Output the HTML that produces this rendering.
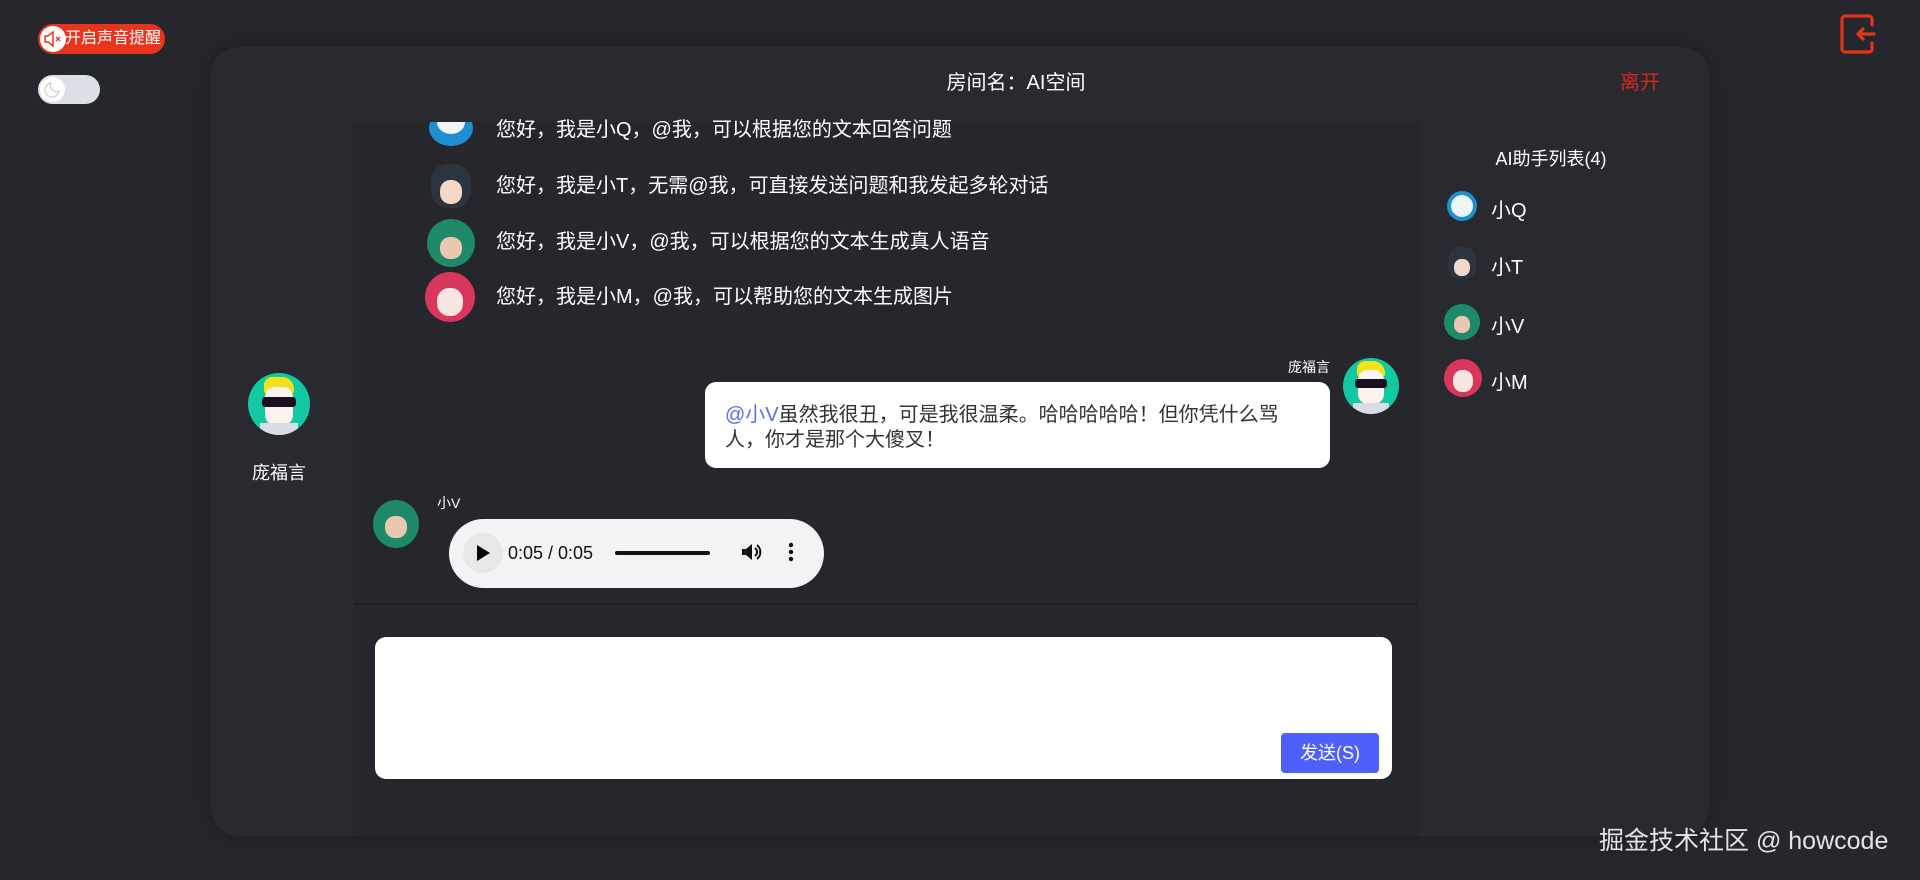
<!DOCTYPE html>
<html><head><meta charset="utf-8"><style>
*{margin:0;padding:0;box-sizing:border-box}
body{width:1920px;height:880px;overflow:hidden;background:#25272c;font-family:"Liberation Sans","Noto Sans CJK SC",sans-serif;color:#fff;position:relative}
.abs{position:absolute}
.panel{left:211px;top:47px;width:1498px;height:789px;background:#282a2f;border-radius:28px;box-shadow:0 0 30px rgba(0,0,0,.25)}
.av{position:absolute;border-radius:50%;overflow:hidden}
.msg{position:absolute;left:496px;font-size:20px;color:#fff;line-height:24px}
.side{position:absolute;left:1491px;font-size:20px}
</style></head><body>
<div class="abs" style="left:38px;top:24px;width:127px;height:30px;background:#e8341c;border-radius:15px"></div>
<div class="abs" style="left:40px;top:26px;width:26px;height:26px;background:#fff;border-radius:50%"></div>
<svg class="abs" style="left:42px;top:30px" width="22" height="18" viewBox="0 0 22 18"><path d="M3 6h3l5-4v14l-5-4H3z" fill="none" stroke="#e8341c" stroke-width="1.5"/><path d="M14 7l4 4M18 7l-4 4" stroke="#e8341c" stroke-width="1.3"/></svg>
<div class="abs" style="left:65px;top:28px;font-size:16px;line-height:22px;color:#fff">开启声音提醒</div>
<div class="abs" style="left:38px;top:75px;width:62px;height:29px;background:#dcdfe6;border-radius:15px"></div>
<div class="abs" style="left:40px;top:77px;width:25px;height:25px;background:#fff;border-radius:50%"></div>
<svg class="abs" style="left:43px;top:80px" width="19" height="19" viewBox="0 0 19 19"><path d="M8 3a7 7 0 1 0 8 8A6 6 0 0 1 8 3z" fill="none" stroke="#ccc" stroke-width="1.2"/></svg>
<svg class="abs" style="left:1838px;top:13px" width="42" height="42" viewBox="0 0 42 42"><path d="M34 12V6a3 3 0 0 0-3-3H7a3 3 0 0 0-3 3v30a3 3 0 0 0 3 3h24a3 3 0 0 0 3-3v-6" fill="none" stroke="#e0341c" stroke-width="3.2" stroke-linecap="round"/><path d="M36 21H20M25 16l-5 5 5 5" fill="none" stroke="#e0341c" stroke-width="3.2" stroke-linecap="round" stroke-linejoin="round"/></svg>

<div class="abs panel"></div>
<div class="abs" style="left:0;width:2032px;top:70px;text-align:center;font-size:20px;line-height:26px">房间名：AI空间</div>
<div class="abs" style="left:1620px;top:70px;font-size:20px;line-height:26px;color:#d9261c">离开</div>

<div class="av" style="left:248px;top:373px;width:62px;height:62px;background:#12c9a4">
<div class="abs" style="left:16px;top:4px;width:30px;height:16px;background:#f5e11b;border-radius:8px 12px 2px 2px"></div>
<div class="abs" style="left:17px;top:14px;width:28px;height:38px;background:#fdf3ee;border-radius:10px"></div>
<div class="abs" style="left:14px;top:24px;width:34px;height:10px;background:#1a1020;border-radius:3px"></div>
<div class="abs" style="left:12px;top:50px;width:38px;height:14px;background:#d8dde6"></div>
</div>
<div class="abs" style="left:252px;top:461px;font-size:18px;line-height:24px">庞福言</div>

<div class="abs" style="left:353px;top:122px;width:1064px;height:482px;background:#25272c"></div>
<div class="abs" style="left:1417px;top:122px;width:2px;height:714px;background:#23252a"></div>
<div class="abs" style="left:353px;top:603px;width:1064px;height:2px;background:#1f2125"></div>
<div class="abs" style="left:353px;top:605px;width:1064px;height:231px;background:#25272c"></div>

<div class="abs" style="left:353px;top:122px;width:1064px;height:482px;overflow:hidden">
<div class="av" style="left:76px;top:-12px;width:44px;height:36px;background:#1e8fd0"><div class="abs" style="left:8px;top:0;width:28px;height:24px;background:#eef4f7;border-radius:50%"></div></div>
<div class="av" style="left:78px;top:42px;width:40px;height:44px;background:#2c3440;border-radius:40%"><div class="abs" style="left:9px;top:16px;width:22px;height:24px;background:#f3d8c8;border-radius:45%"></div></div>
<div class="av" style="left:74px;top:97px;width:48px;height:48px;background:#1f8a6a"><div class="abs" style="left:13px;top:18px;width:22px;height:22px;background:#e9c7b0;border-radius:45%"></div></div>
<div class="av" style="left:72px;top:150px;width:50px;height:50px;background:#d8365a"><div class="abs" style="left:12px;top:16px;width:26px;height:28px;background:#f6e5e0;border-radius:45%"></div></div>
</div>
<div class="msg" style="top:118px">您好，我是小Q，@我，可以根据您的文本回答问题</div>
<div class="msg" style="top:174px">您好，我是小T，无需@我，可直接发送问题和我发起多轮对话</div>
<div class="msg" style="top:230px">您好，我是小V，@我，可以根据您的文本生成真人语音</div>
<div class="msg" style="top:285px">您好，我是小M，@我，可以帮助您的文本生成图片</div>

<div class="abs" style="left:1230px;top:358px;width:100px;text-align:right;font-size:14px;line-height:18px">庞福言</div>
<div class="av" style="left:1343px;top:358px;width:56px;height:56px;background:#12c9a4">
<div class="abs" style="left:14px;top:3px;width:28px;height:15px;background:#f5e11b;border-radius:8px 12px 2px 2px"></div>
<div class="abs" style="left:15px;top:12px;width:26px;height:34px;background:#fdf3ee;border-radius:10px"></div>
<div class="abs" style="left:12px;top:21px;width:32px;height:9px;background:#1a1020;border-radius:3px"></div>
<div class="abs" style="left:10px;top:45px;width:36px;height:12px;background:#d8dde6"></div>
</div>
<div class="abs" style="left:705px;top:382px;width:625px;height:86px;background:#fff;border-radius:11px;padding:21px 44px 17px 20px;font-size:20px;line-height:25px;color:#333"><span style="color:#5b6cf0">@小V</span>虽然我很丑，可是我很温柔。哈哈哈哈哈！但你凭什么骂人，你才是那个大傻叉！</div>

<div class="av" style="left:373px;top:500px;width:46px;height:48px;background:#1f8a6a"><div class="abs" style="left:12px;top:16px;width:22px;height:22px;background:#e9c7b0;border-radius:45%"></div></div>
<div class="abs" style="left:437px;top:494px;font-size:14px;line-height:18px">小V</div>
<div class="abs" style="left:449px;top:519px;width:375px;height:69px;background:#f1f3f4;border-radius:35px"></div>
<div class="abs" style="left:463px;top:533px;width:40px;height:40px;background:#e6e7e9;border-radius:50%"></div>
<svg class="abs" style="left:475px;top:544px" width="16" height="18"><path d="M2 1l13 8-13 8z" fill="#000"/></svg>
<div class="abs" style="left:508px;top:541px;font-size:18px;line-height:24px;color:#111">0:05 / 0:05</div>
<div class="abs" style="left:615px;top:551px;width:95px;height:4px;background:#111;border-radius:2px"></div>
<svg class="abs" style="left:740px;top:541px" width="22" height="22" viewBox="0 0 22 22"><path d="M2 8h4l6-5v16l-6-5H2z" fill="#111"/><path d="M15 7a5 5 0 0 1 0 8M17 4a9 9 0 0 1 0 14" stroke="#111" stroke-width="2" fill="none"/></svg>
<svg class="abs" style="left:788px;top:542px" width="6" height="20"><circle cx="3" cy="3" r="2.2" fill="#111"/><circle cx="3" cy="10" r="2.2" fill="#111"/><circle cx="3" cy="17" r="2.2" fill="#111"/></svg>

<div class="abs" style="left:375px;top:637px;width:1017px;height:142px;background:#fff;border-radius:11px"></div>
<div class="abs" style="left:1281px;top:733px;width:98px;height:40px;background:#4e5ffb;border-radius:4px;font-size:18px;line-height:40px;text-align:center;color:#fff">发送(S)</div>

<div class="abs" style="left:1420px;width:262px;top:147px;text-align:center;font-size:18px;line-height:24px">AI助手列表(4)</div>
<div class="av" style="left:1447px;top:191px;width:30px;height:30px;background:#1e8fd0"><div class="abs" style="left:4px;top:4px;width:22px;height:22px;background:#eef4f7;border-radius:50%"></div></div>
<div class="av" style="left:1448px;top:247px;width:28px;height:32px;background:#2c3440;border-radius:40%"><div class="abs" style="left:6px;top:12px;width:16px;height:17px;background:#f3d8c8;border-radius:45%"></div></div>
<div class="av" style="left:1444px;top:304px;width:36px;height:36px;background:#1f8a6a"><div class="abs" style="left:10px;top:12px;width:16px;height:17px;background:#e9c7b0;border-radius:45%"></div></div>
<div class="av" style="left:1444px;top:359px;width:38px;height:38px;background:#d8365a"><div class="abs" style="left:9px;top:11px;width:20px;height:22px;background:#f6e5e0;border-radius:45%"></div></div>
<div class="side" style="top:194px">小Q</div>
<div class="side" style="top:251px">小T</div>
<div class="side" style="top:310px">小V</div>
<div class="side" style="top:366px">小M</div>

<div class="abs" style="left:1599px;top:825px;font-size:25px;line-height:32px;color:#e4e4e4">掘金技术社区 @ howcode</div>
</body></html>
